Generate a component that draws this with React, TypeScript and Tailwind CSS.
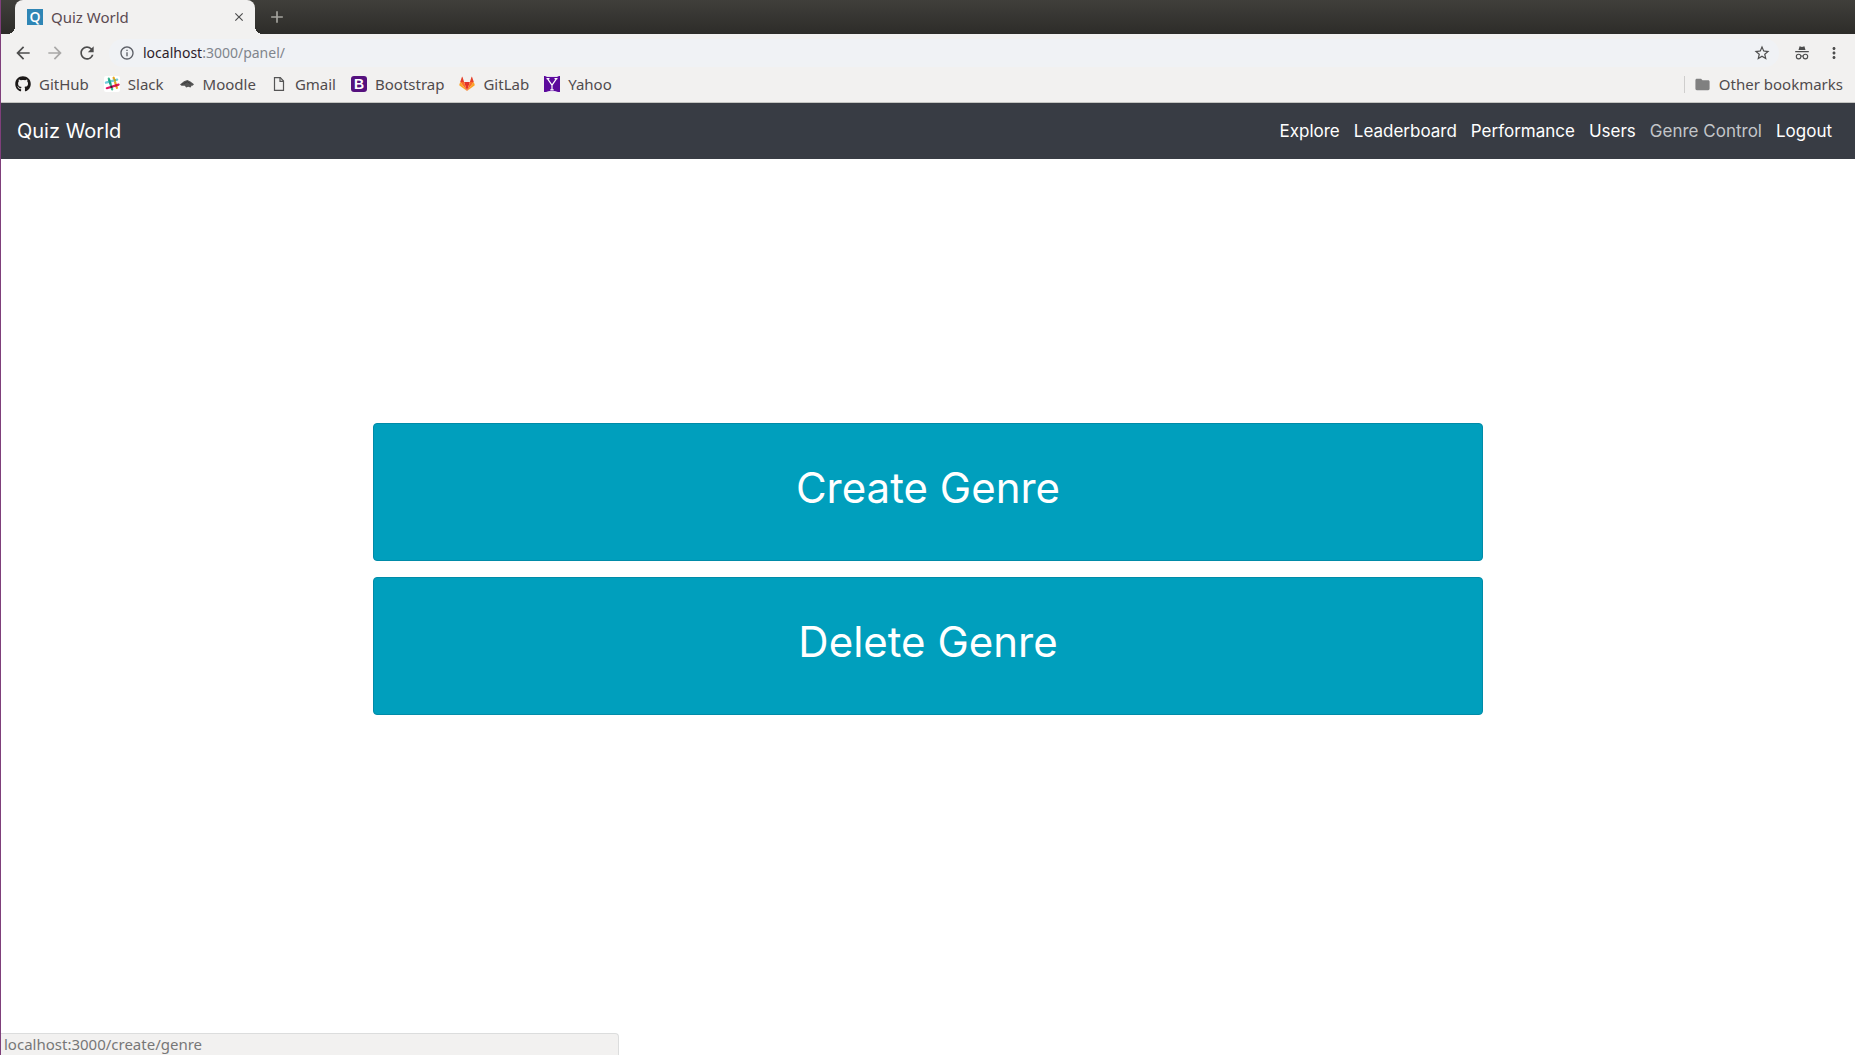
import type { ReactNode } from 'react';
import { FaGithub } from 'react-icons/fa';
import {
  MdArrowBack,
  MdArrowForward,
  MdClose,
  MdFolder,
  MdAdd,
  MdInfoOutline,
  MdMoreVert,
  MdRefresh,
  MdStarBorder,
} from 'react-icons/md';

function QuizIcon() {
  return (
    <span
      aria-hidden="true"
      className="flex size-4 items-center justify-center bg-[#2f86b5] font-['Open_Sans',sans-serif] text-sm leading-4 font-semibold text-white"
    >
      Q
    </span>
  );
}

function SlackIcon() {
  return (
    <svg viewBox="0 0 16 16" className="size-4" aria-hidden="true">
      <rect width="16" height="16" rx="2" fill="#fff" />
      <g strokeWidth="2.2" strokeLinecap="round" fill="none">
        <path d="M4.8 2.6 8.2 13.4" stroke="#3eb991" />
        <path d="M9.6 1.7 12.9 11.9" stroke="#e9a820" />
        <path d="M1.9 6.6 13.2 3.6" stroke="#70cadb" />
        <path d="M2.8 12.2 14.6 8.6" stroke="#e01563" />
        <path d="M5.3 4.3 6.2 7.4" stroke="#1aa48a" />
        <path d="M10.8 4.2h.1" stroke="#b5a823" />
        <path d="M7.4 10.9h.1" stroke="#3a1b2e" />
        <path d="M12.2 9.4h.1" stroke="#cc2027" />
      </g>
    </svg>
  );
}

function MoodleIcon() {
  return (
    <svg viewBox="0 0 16 16" className="size-4" aria-hidden="true">
      <path d="M1 8.4 5 5.2 8.4 4l3 1.6L15 8.2l-1.4 1.6-.8-.4-1.3 2-2.3-.7-2 .9-1.4-1.9-3.3.1Z" fill="#555" />
      <path d="m5 7.5 3.3-1.8 3.2 2M2.8 8.3l1.7-.7" stroke="#333" strokeWidth=".8" fill="none" />
    </svg>
  );
}

function PageIcon() {
  return (
    <svg viewBox="0 0 16 16" className="size-4" fill="none" stroke="#555" strokeWidth="1.2" aria-hidden="true">
      <path d="M3.5 1.6h5.8l3.2 3.4v9.4h-9z" />
      <path d="M9 1.8v3.5h3.4" />
    </svg>
  );
}

function BootstrapIcon() {
  return (
    <span
      aria-hidden="true"
      className="flex size-4 items-center justify-center rounded-[3px] bg-[#55117e] font-['Liberation_Sans',sans-serif] text-sm leading-4 font-bold text-white"
    >
      B
    </span>
  );
}

function GitLabIcon() {
  return (
    <svg viewBox="0 0 16 16" className="size-4" aria-hidden="true">
      <path d="M8 15 5.1 6h5.8z" fill="#e2332a" />
      <path d="M8 15 5.1 6H1.2zM8 15l2.9-9h3.9z" fill="#fc6d26" />
      <path d="M1.2 6 .3 8.7c-.1.3 0 .5.2.7L8 15zM14.8 6l.9 2.7c.1.3 0 .5-.2.7L8 15z" fill="#fca326" />
      <path d="M1.2 6h3.9L3.5 1c-.1-.3-.5-.3-.6 0zM14.8 6h-3.9l1.6-5c.1-.3.5-.3.6 0z" fill="#e5402a" />
    </svg>
  );
}

function YahooIcon() {
  return (
    <svg viewBox="0 0 16 16" className="size-4" aria-hidden="true">
      <rect width="16" height="16" fill="#5c0a9c" />
      <path d="M1 0h14l-2 1H3zM2 16l3-1h6l3 1z" fill="#e9dff2" />
      <path d="M3.6 2.8 8 9.2l4.4-6.4M8 9v5M2.5 2.7h3M10.5 2.7h3M6.3 13.8h3.4" stroke="#fff" strokeWidth="1.2" fill="none" />
    </svg>
  );
}

function IncognitoIcon() {
  return (
    <svg viewBox="0 0 16 16" className="size-4" aria-hidden="true">
      <path d="M4.5 5 5.6 1.2 8 2l2.4-.8L11.5 5zM1.2 6h13.6v1.2H1.2z" fill="#4d4d4d" />
      <g fill="none" stroke="#4d4d4d" strokeWidth="1.1">
        <circle cx="4.6" cy="11.6" r="2.3" />
        <circle cx="11.4" cy="11.6" r="2.3" />
        <path d="M6.9 11.3q1.1-.7 2.2 0" />
      </g>
    </svg>
  );
}

const bookmarks: { label: string; icon: ReactNode }[] = [
  { label: 'GitHub', icon: <FaGithub className="size-4 text-[#1b1817]" /> },
  { label: 'Slack', icon: <SlackIcon /> },
  { label: 'Moodle', icon: <MoodleIcon /> },
  { label: 'Gmail', icon: <PageIcon /> },
  { label: 'Bootstrap', icon: <BootstrapIcon /> },
  { label: 'GitLab', icon: <GitLabIcon /> },
  { label: 'Yahoo', icon: <YahooIcon /> },
];

const navLinks = ['Explore', 'Leaderboard', 'Performance', 'Users', 'Genre Control', 'Logout'];

function TabStrip() {
  return (
    <div className="flex h-[34px] items-end bg-linear-to-b from-[#403f3b] to-[#2d2c29]">
      <div className="relative ml-[14px] flex h-[34px] w-60 items-center rounded-t-lg bg-[#f2f1f0] pr-[6px] pl-3">
        <span className="absolute right-full bottom-0 size-2 bg-[radial-gradient(circle_at_0_0,transparent_8px,#f2f1f0_8px)]" />
        <span className="absolute bottom-0 left-full size-2 bg-[radial-gradient(circle_at_100%_0,transparent_8px,#f2f1f0_8px)]" />
        <QuizIcon />
        <span className="ml-2 flex-1 pb-px text-[#5b4a50]">Quiz World</span>
        <button type="button" aria-label="Close tab" className="p-[3px] text-[#4d4d4d]">
          <MdClose className="size-[14px]" />
        </button>
      </div>
      <button type="button" aria-label="New tab" className="ml-3 flex h-[34px] items-center text-[#a5a49f]">
        <MdAdd className="size-5" />
      </button>
    </div>
  );
}

function Toolbar() {
  return (
    <div className="flex h-[38px] items-center pr-3 pl-3 text-[#4d4d4d]">
      <div className="flex items-center gap-3">
        <button type="button" aria-label="Back"><MdArrowBack className="size-5" /></button>
        <button type="button" aria-label="Forward" className="text-[#a9a8a7]"><MdArrowForward className="size-5" /></button>
        <button type="button" aria-label="Reload"><MdRefresh className="size-5" /></button>
      </div>
      <div className="ml-3 flex h-7 flex-1 items-center rounded-full bg-[#f0f2f5] pr-2 pl-[10px]">
        <MdInfoOutline className="size-4 text-[#5c5f66]" />
        <a href="#panel" className="ml-2 flex-1 text-sm text-[#80858c]">
          <span className="text-[#2d1d2a]">localhost</span>:3000/panel/
        </a>
        <button type="button" aria-label="Bookmark this page"><MdStarBorder className="size-[18px]" /></button>
      </div>
      <span className="ml-[15px]"><IncognitoIcon /></span>
      <button type="button" aria-label="Menu" className="ml-[15px]"><MdMoreVert className="size-[18px]" /></button>
    </div>
  );
}

function BookmarksBar() {
  return (
    <div className="flex h-[31px] items-center border-b border-[#c4c4c1] pr-3 pb-[6px] pl-[14px] text-[#504b4d]">
      <nav aria-label="Bookmarks" className="flex flex-1 gap-[15px]">
        {bookmarks.map(({ label, icon }) => (
          <a key={label} href="#bookmark" className="flex items-center gap-2">
            {icon}
            {label}
          </a>
        ))}
      </nav>
      <a href="#other" className="flex items-center gap-2 border-l border-[#cfcecd] pl-[9px] leading-4">
        <MdFolder className="size-[17px] text-[#808080]" />
        Other bookmarks
      </a>
    </div>
  );
}

export default function App() {
  return (
    <div className="relative flex min-h-screen flex-col border-l border-[#7f3f7b] bg-white font-['Inter',sans-serif]">
      <header className="bg-[#f2f1f0] font-['Noto_Sans',sans-serif] text-[15px] leading-5">
        <TabStrip />
        <Toolbar />
        <BookmarksBar />
      </header>
      <nav aria-label="Main" className="flex h-14 items-center justify-between bg-[#383c44] px-4 text-white">
        <a href="#home" className="text-xl">Quiz World</a>
        <div className="flex text-[17px] leading-6">
          {navLinks.map((label) => (
            <a
              key={label}
              href="#page"
              className={label === 'Genre Control' ? 'px-[7px] text-[#c3c5c9]' : 'px-[7px]'}
            >
              {label}
            </a>
          ))}
        </div>
      </nav>
      <main className="mx-auto flex w-full max-w-[1110px] flex-1 flex-col justify-center gap-4 pb-[76px] text-[42px] leading-[48px] text-white">
        <button type="button" className="h-[138px] rounded border border-[#008ba8] bg-[#009fbd] pb-2">
          Create Genre
        </button>
        <button type="button" className="h-[138px] rounded border border-[#008ba8] bg-[#009fbd] pb-2">
          Delete Genre
        </button>
      </main>
      <div className="absolute bottom-0 left-0 h-[22px] w-1/3 rounded-tr border-t border-r border-[#dcdddd] bg-[#f2f1f0] pl-[3px] font-['Noto_Sans',sans-serif] text-[15px] leading-5 text-[#777]">
        localhost:3000/create/genre
      </div>
    </div>
  );
}
